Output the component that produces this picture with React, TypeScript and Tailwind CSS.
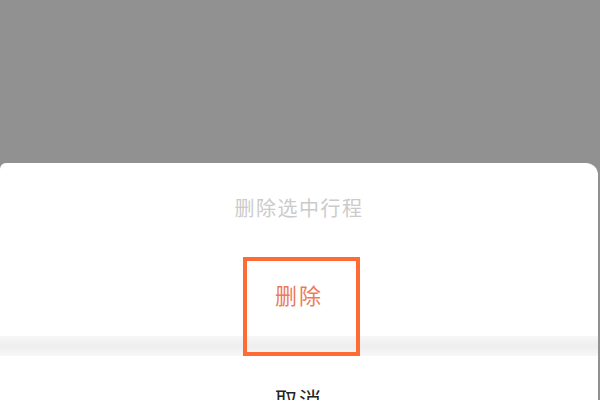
export default function App() {
  return (
    <div
      className="relative flex h-[400px] w-[600px] flex-col overflow-hidden bg-[#919191]"
      style={{ fontFamily: '"Noto Sans CJK SC", "Noto Sans", sans-serif' }}
    >
      {/* Dimmed backdrop */}
      <div className="h-[163px] shrink-0" />

      {/* Action sheet */}
      <div className="mr-[2px] flex flex-1 flex-col rounded-tl-[6px] rounded-tr-[12px] bg-white">
        <div className="flex h-[90px] shrink-0 items-center justify-center text-[20px] tracking-[1.5px] text-[#cbcbcb]">
          删除选中行程
        </div>
        <div className="flex h-[83px] shrink-0 items-center justify-center text-[22px] tracking-[2px] text-[#ee7a5a]">
          删除
        </div>
        <div className="h-[20px] shrink-0 bg-gradient-to-b from-[#f7f7f7] via-[#eeeeee] to-[#f7f7f7]" />
        <div className="flex h-[84px] shrink-0 items-center justify-center text-[22px] tracking-[2px] text-[#222222]">
          取消
        </div>
      </div>

      {/* Highlight annotation */}
      <div className="pointer-events-none absolute left-[243px] top-[257px] h-[99px] w-[117px] border-[4px] border-[#ff6a35]" />
    </div>
  )
}
